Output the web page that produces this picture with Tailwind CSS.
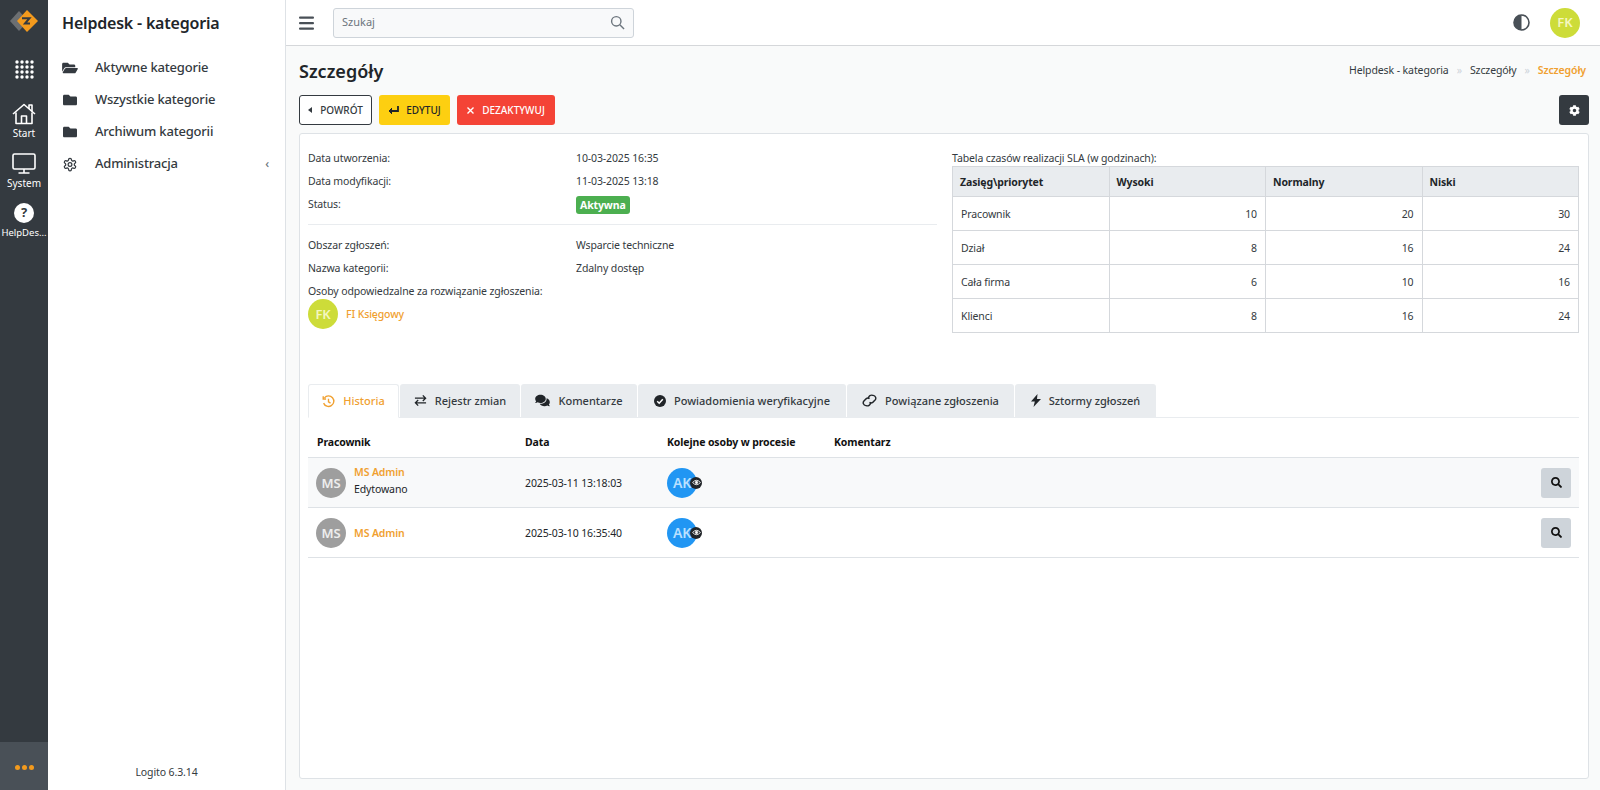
<!DOCTYPE html>
<html lang="pl">
<head>
    <meta charset="UTF-8">
    <title>Helpdesk - kategoria</title>
    <script src="https://cdn.jsdelivr.net/npm/@tailwindcss/browser@4"></script>
</head>
<body class="bg-white font-['Noto_Sans',sans-serif] text-[12px] text-[#343a40]">
<div class="flex h-[790px] w-[1600px] overflow-hidden">

    <!-- Icon rail -->
    <aside class="w-12 shrink-0 bg-[#343a40] flex flex-col items-center text-white">
        <svg class="mt-[10px] w-[30px] h-[22px]" viewBox="0 0 30 22">
            <path d="M10 1 L19 11 L10 21 L1 11 Z" fill="#6c6f72"/>
            <path d="M18 0 L29 11 L18 22 L8 11 Z" fill="#f39a1d"/>
            <path d="M13 8.2 H20.5 L16 13.5 H21" fill="none" stroke="#343a40" stroke-width="2"/>
        </svg>
        <svg class="mt-[28px] w-[19px] h-[19px]" viewBox="0 0 19 19" fill="#fff">
            <circle cx="2" cy="2" r="1.7"/><circle cx="7" cy="2" r="1.7"/><circle cx="12" cy="2" r="1.7"/><circle cx="17" cy="2" r="1.7"/>
            <circle cx="2" cy="7" r="1.7"/><circle cx="7" cy="7" r="1.7"/><circle cx="12" cy="7" r="1.7"/><circle cx="17" cy="7" r="1.7"/>
            <circle cx="2" cy="12" r="1.7"/><circle cx="7" cy="12" r="1.7"/><circle cx="12" cy="12" r="1.7"/><circle cx="17" cy="12" r="1.7"/>
            <circle cx="2" cy="17" r="1.7"/><circle cx="7" cy="17" r="1.7"/><circle cx="12" cy="17" r="1.7"/><circle cx="17" cy="17" r="1.7"/>
        </svg>
        <svg class="mt-[24px] w-6 h-[22px]" viewBox="0 0 24 22" fill="none" stroke="#fff" stroke-width="1.6" stroke-linejoin="round">
            <path d="M1 11 L12 1.5 L23 11"/>
            <path d="M17 6 V2 H20 V8.5"/>
            <path d="M4 9.5 V20.5 H20 V9.5"/>
            <path d="M9.5 20.5 V13 H14.5 V20.5"/>
        </svg>
        <span class="mt-[1px] text-[10px] leading-[14px]">Start</span>
        <svg class="mt-[13px] w-6 h-[21px]" viewBox="0 0 24 21" fill="none" stroke="#fff" stroke-width="1.6">
            <rect x="1" y="1" width="22" height="15" rx="1.5"/>
            <path d="M12 16 V20 M6.5 20 H17.5"/>
        </svg>
        <span class="mt-[2px] text-[10px] leading-[14px]">System</span>
        <div class="mt-[13px] w-5 h-5 rounded-full bg-white text-[#343a40] flex items-center justify-center text-[13px] font-bold">?</div>
        <span class="mt-[3px] w-full text-[9.5px] leading-[14px] whitespace-nowrap text-center">HelpDes...</span>
        <div class="mt-auto h-[48px] w-full bg-[#495057] flex items-center justify-center gap-[2px] pt-[2px]">
            <span class="w-[5px] h-[5px] rounded-full bg-[#f39a1d]"></span>
            <span class="w-[5px] h-[5px] rounded-full bg-[#f39a1d]"></span>
            <span class="w-[5px] h-[5px] rounded-full bg-[#f39a1d]"></span>
        </div>
    </aside>

    <!-- Module menu -->
    <aside class="w-[238px] shrink-0 bg-white border-r border-[#dee2e6] flex flex-col">
        <h1 class="mt-[10px] pl-[14px] text-[16px] tracking-[-0.2px] leading-[26px] font-semibold text-[#212529]">Helpdesk - kategoria</h1>
        <nav class="mt-[16px] text-[13px] tracking-[-0.2px] font-medium text-[#343a40]">
            <a class="flex items-center h-[32px] pl-[14px]">
                <svg class="w-[16px] h-[14px] mr-[17px]" viewBox="0 0 576 512" fill="#343a40"><path d="M572.694 292.093L500.27 416.248A63.997 63.997 0 0 1 444.989 448H45.025c-18.523 0-30.064-20.093-20.731-36.093l72.424-124.155A64 64 0 0 1 152 256h399.964c18.523 0 30.064 20.093 20.73 36.093zM152 224h328v-48c0-26.51-21.49-48-48-48H272l-64-64H48C21.49 64 0 85.49 0 112v278.046l69.077-118.418C86.214 242.25 117.989 224 152 224z"/></svg>
                Aktywne kategorie
            </a>
            <a class="flex items-center h-[31px] pl-[14px]">
                <svg class="w-[16px] h-[14px] mr-[17px]" viewBox="0 0 512 512" fill="#343a40"><path d="M464 128H272l-64-64H48C21.49 64 0 85.49 0 112v288c0 26.51 21.49 48 48 48h416c26.51 0 48-21.49 48-48V176c0-26.51-21.49-48-48-48z"/></svg>
                Wszystkie kategorie
            </a>
            <a class="flex items-center h-[33px] pl-[14px]">
                <svg class="w-[16px] h-[14px] mr-[17px]" viewBox="0 0 512 512" fill="#343a40"><path d="M464 128H272l-64-64H48C21.49 64 0 85.49 0 112v288c0 26.51 21.49 48 48 48h416c26.51 0 48-21.49 48-48V176c0-26.51-21.49-48-48-48z"/></svg>
                Archiwum kategorii
            </a>
            <a class="flex items-center h-[32px] pl-[14px] pr-[16px]">
                <svg class="w-[16px] h-[15px] mr-[17px]" viewBox="0 0 24 24" fill="none" stroke="#343a40" stroke-width="2"><path d="M12.22 2h-.44a2 2 0 0 0-2 2v.18a2 2 0 0 1-1 1.73l-.43.25a2 2 0 0 1-2 0l-.15-.08a2 2 0 0 0-2.73.73l-.22.38a2 2 0 0 0 .73 2.73l.15.1a2 2 0 0 1 1 1.72v.51a2 2 0 0 1-1 1.74l-.15.09a2 2 0 0 0-.73 2.73l.22.38a2 2 0 0 0 2.73.73l.15-.08a2 2 0 0 1 2 0l.43.25a2 2 0 0 1 1 1.73V20a2 2 0 0 0 2 2h.44a2 2 0 0 0 2-2v-.18a2 2 0 0 1 1-1.73l.43-.25a2 2 0 0 1 2 0l.15.08a2 2 0 0 0 2.73-.73l.22-.39a2 2 0 0 0-.73-2.73l-.15-.08a2 2 0 0 1-1-1.74v-.5a2 2 0 0 1 1-1.74l.15-.09a2 2 0 0 0 .73-2.73l-.22-.38a2 2 0 0 0-2.73-.73l-.15.08a2 2 0 0 1-2 0l-.43-.25a2 2 0 0 1-1-1.73V4a2 2 0 0 0-2-2z"/><circle cx="12" cy="12" r="3"/></svg>
                Administracja
                <span class="ml-auto text-[12px] text-[#6c757d]">‹</span>
            </a>
        </nav>
        <p class="mt-auto mb-[10px] text-center text-[10.5px] tracking-[-0.1px] leading-[16px] text-[#343a40]">Logito 6.3.14</p>
    </aside>

    <!-- Main -->
    <div class="flex-1 min-w-0 flex flex-col bg-[#f9fafa]">
        <header class="h-[46px] shrink-0 bg-white border-b border-[#d5d7da] flex items-center pl-[13px] pr-[20px]">
            <svg class="w-[15px] h-[14px]" viewBox="0 0 15 14" fill="#495057"><rect width="15" height="2.2" rx="1" y="0.5"/><rect width="15" height="2.2" rx="1" y="6"/><rect width="15" height="2.2" rx="1" y="11.5"/></svg>
            <div class="ml-[19px] w-[301px] h-[30px] bg-[#f8f9fa] border border-[#ced4da] rounded-[3px] flex items-center justify-between pl-[8px] pr-[8px]">
                <span class="text-[11px] text-[#6c757d]">Szukaj</span>
                <svg class="w-[15px] h-[15px]" viewBox="0 0 16 16" fill="none" stroke="#6c757d" stroke-width="1.5"><circle cx="6.7" cy="6.7" r="5"/><path d="M10.5 10.5 L15 15"/></svg>
            </div>
            <svg class="ml-auto w-[17px] h-[17px]" viewBox="0 0 17 17"><circle cx="8.5" cy="8.5" r="7.5" fill="#fff" stroke="#495057" stroke-width="1.6"/><path d="M8.5 1 A7.5 7.5 0 0 0 8.5 16 Z" fill="#495057"/></svg>
            <div class="ml-[20px] w-[30px] h-[30px] rounded-full bg-[#cddc39] text-[#f4f7c0] flex items-center justify-center text-[13px] font-semibold">FK</div>
        </header>

        <main class="flex-1 min-h-0 flex flex-col pl-[13px] pr-[11px] pb-[11px]">
            <div class="h-[49px] shrink-0 flex items-center justify-between">
                <h2 class="pt-[1px] text-[18px] font-semibold text-[#212529]">Szczegóły</h2>
                <div class="pr-[3px] flex items-center gap-[8px] text-[10.5px] tracking-[-0.1px]">
                    <span>Helpdesk - kategoria</span>
                    <span class="text-[#ced4da]">»</span>
                    <span>Szczegóły</span>
                    <span class="text-[#ced4da]">»</span>
                    <span class="text-[#f0a030] font-semibold">Szczegóły</span>
                </div>
            </div>

            <div class="flex shrink-0 h-[30px] gap-[7px] text-[10px] font-medium">
                <button class="w-[73px] bg-white border border-[#343a40] rounded-[3px] flex items-center justify-center gap-[8px]">
                    <svg class="w-[4px] h-[6px]" viewBox="0 0 4 6" fill="#343a40"><path d="M4 0 V6 L0 3 Z"/></svg>POWRÓT
                </button>
                <button class="w-[71px] bg-[#fdcf11] rounded-[3px] flex items-center justify-center gap-[7px] text-[#212529]">
                    <svg class="w-[11px] h-[9px]" viewBox="0 0 11 9" fill="none" stroke="#212529" stroke-width="1.8"><path d="M10 0 V5 H2"/><path d="M4 2 L1 5 L4 8" fill="#212529" stroke-width="1"/></svg>EDYTUJ
                </button>
                <button class="w-[98px] bg-[#f44336] rounded-[3px] flex items-center justify-center gap-[8px] text-white">
                    <svg class="w-[7px] h-[7px]" viewBox="0 0 7 7" stroke="#fff" stroke-width="1.4"><path d="M0.5 0.5 L6.5 6.5 M6.5 0.5 L0.5 6.5"/></svg>DEZAKTYWUJ
                </button>
                <button class="ml-auto w-[30px] bg-[#343a40] rounded-[3px] flex items-center justify-center">
                    <svg class="w-[11px] h-[11px]" viewBox="0 0 512 512" fill="#fff"><path d="M487.4 315.7l-42.6-24.6c4.3-23.2 4.3-47 0-70.2l42.6-24.6c4.9-2.8 7.1-8.6 5.5-14-11.1-35.6-30-67.8-54.7-94.6-3.8-4.1-10-5.1-14.8-2.3L380.8 110c-17.9-15.4-38.5-27.3-60.8-35.1V25.8c0-5.6-3.9-10.5-9.4-11.7-36.7-8.2-74.3-7.8-109.2 0-5.5 1.2-9.4 6.1-9.4 11.7V75c-22.2 7.9-42.8 19.8-60.8 35.1L88.7 85.5c-4.9-2.8-11-1.9-14.8 2.3-24.7 26.7-43.6 58.9-54.7 94.6-1.7 5.4.6 11.2 5.5 14L67.3 221c-4.3 23.2-4.3 47 0 70.2l-42.6 24.6c-4.9 2.8-7.1 8.6-5.5 14 11.1 35.6 30 67.8 54.7 94.6 3.8 4.1 10 5.1 14.8 2.3l42.6-24.6c17.9 15.4 38.5 27.3 60.8 35.1v49.2c0 5.6 3.9 10.5 9.4 11.7 36.7 8.2 74.3 7.8 109.2 0 5.5-1.2 9.4-6.1 9.4-11.7v-49.2c22.2-7.9 42.8-19.8 60.8-35.1l42.6 24.6c4.9 2.8 11 1.9 14.8-2.3 24.7-26.7 43.6-58.9 54.7-94.6 1.5-5.5-.7-11.3-5.6-14.1zM256 336c-44.1 0-80-35.9-80-80s35.9-80 80-80 80 35.9 80 80-35.9 80-80 80z"/></svg>
                </button>
            </div>

            <!-- Card -->
            <section class="mt-[8px] flex-1 min-h-0 bg-white border border-[#dee2e6] rounded-[3px] pl-[8px] pr-[9px] pt-[13px] text-[10.5px] tracking-[-0.12px] leading-[22px]">
                <div class="flex h-[237px] gap-[15px]">
                    <div class="w-[629px] shrink-0">
                        <div class="flex h-[23px]"><span class="w-[268px]">Data utworzenia:</span><span>10-03-2025 16:35</span></div>
                        <div class="flex h-[23px]"><span class="w-[268px]">Data modyfikacji:</span><span>11-03-2025 13:18</span></div>
                        <div class="flex h-[23px]"><span class="w-[268px]">Status:</span><span class="self-center h-[18px] px-[4px] rounded-[3px] bg-[#4caf50] text-white font-bold leading-[18px]">Aktywna</span></div>
                        <div class="mt-[8px] mb-[9px] border-t border-[#e9ecef]"></div>
                        <div class="flex h-[23px]"><span class="w-[268px]">Obszar zgłoszeń:</span><span>Wsparcie techniczne</span></div>
                        <div class="flex h-[23px]"><span class="w-[268px]">Nazwa kategorii:</span><span>Zdalny dostęp</span></div>
                        <p class="h-[19px]">Osoby odpowiedzalne za rozwiązanie zgłoszenia:</p>
                        <div class="flex items-center gap-[8px]">
                            <div class="w-[30px] h-[30px] rounded-full bg-[#cddc39] text-[#f4f7c0] flex items-center justify-center text-[13px] font-semibold">FK</div>
                            <span class="text-[#f0a030] font-medium">FI Księgowy</span>
                        </div>
                    </div>
                    <div class="flex-1 min-w-0">
                        <p class="h-[19px] leading-[22px]">Tabela czasów realizacji SLA (w godzinach):</p>
                        <table class="w-full table-fixed border-collapse">
                            <thead>
                                <tr class="h-[30px] bg-[#e9ecef] text-[#212529] text-left">
                                    <th class="border border-[#d5d8dc] pl-[7px] font-bold">Zasięg\priorytet</th>
                                    <th class="border border-[#d5d8dc] pl-[7px] font-bold">Wysoki</th>
                                    <th class="border border-[#d5d8dc] pl-[7px] font-bold">Normalny</th>
                                    <th class="border border-[#d5d8dc] pl-[7px] font-bold">Niski</th>
                                </tr>
                            </thead>
                            <tbody>
                                <tr class="h-[34px]"><td class="border border-[#d5d8dc] pl-[8px]">Pracownik</td><td class="border border-[#d5d8dc] pr-[8px] text-right">10</td><td class="border border-[#d5d8dc] pr-[8px] text-right">20</td><td class="border border-[#d5d8dc] pr-[8px] text-right">30</td></tr>
                                <tr class="h-[34px]"><td class="border border-[#d5d8dc] pl-[8px]">Dział</td><td class="border border-[#d5d8dc] pr-[8px] text-right">8</td><td class="border border-[#d5d8dc] pr-[8px] text-right">16</td><td class="border border-[#d5d8dc] pr-[8px] text-right">24</td></tr>
                                <tr class="h-[34px]"><td class="border border-[#d5d8dc] pl-[8px]">Cała firma</td><td class="border border-[#d5d8dc] pr-[8px] text-right">6</td><td class="border border-[#d5d8dc] pr-[8px] text-right">10</td><td class="border border-[#d5d8dc] pr-[8px] text-right">16</td></tr>
                                <tr class="h-[34px]"><td class="border border-[#d5d8dc] pl-[8px]">Klienci</td><td class="border border-[#d5d8dc] pr-[8px] text-right">8</td><td class="border border-[#d5d8dc] pr-[8px] text-right">16</td><td class="border border-[#d5d8dc] pr-[8px] text-right">24</td></tr>
                            </tbody>
                        </table>
                    </div>
                </div>

                <!-- Tabs -->
                <div class="flex h-[34px] gap-[1px] border-b border-[#e9ecef] text-[11px] tracking-normal font-medium">
                    <a class="w-[91px] h-[34px] bg-white border border-[#e9ecef] border-b-white rounded-t-[3px] flex items-center justify-center gap-[8px] text-[#f0a030]">
                        <svg class="w-[13px] h-[13px]" viewBox="0 0 16 16" fill="none" stroke="#f0a030" stroke-width="1.7"><path d="M3 3.5 A6.5 6.5 0 1 1 2 10"/><path d="M1.5 1.5 V5 H5"/><path d="M8 4.5 V8.5 L10.5 10"/></svg>Historia
                    </a>
                    <a class="w-[120px] h-[33px] bg-[#e9ecef] rounded-t-[3px] flex items-center justify-center gap-[8px]">
                        <svg class="w-[13px] h-[13px]" viewBox="0 0 14 14" fill="none" stroke="#212529" stroke-width="1.4"><path d="M1 4.5 H12.5 M9.5 1.5 L12.5 4.5 L9.5 7.5"/><path d="M13 9.5 H1.5 M4.5 6.5 L1.5 9.5 L4.5 12.5"/></svg>Rejestr zmian
                    </a>
                    <a class="w-[116px] h-[33px] bg-[#e9ecef] rounded-t-[3px] flex items-center justify-center gap-[8px]">
                        <svg class="w-[15px] h-[13px]" viewBox="0 0 576 512" fill="#212529"><path d="M416 192c0-88.4-93.1-160-208-160S0 103.6 0 192c0 34.3 14.1 65.9 38 92-13.4 30.2-35.5 54.2-35.8 54.5-2.2 2.3-2.8 5.7-1.5 8.7S4.8 352 8 352c36.6 0 66.9-12.3 88.7-25 32.2 15.7 70.3 25 111.3 25 114.9 0 208-71.6 208-160zm122 220c23.9-26 38-57.7 38-92 0-66.9-53.5-124.2-129.3-148.1.9 6.6 1.3 13.3 1.3 20.1 0 105.9-107.7 192-240 192-10.8 0-21.3-.8-31.7-1.9C207.8 439.6 281.8 480 368 480c41 0 79.1-9.2 111.3-25 21.8 12.7 52.1 25 88.7 25 3.2 0 6.1-1.9 7.3-4.8 1.3-2.9.7-6.3-1.5-8.7-.3-.3-22.4-24.2-35.8-54.5z"/></svg>Komentarze
                    </a>
                    <a class="w-[208px] h-[33px] bg-[#e9ecef] rounded-t-[3px] flex items-center justify-center gap-[8px]">
                        <svg class="w-[12px] h-[12px]" viewBox="0 0 12 12"><circle cx="6" cy="6" r="6" fill="#212529"/><path d="M3.2 6.2 L5.2 8.2 L8.8 4.2" fill="none" stroke="#fff" stroke-width="1.5"/></svg>Powiadomienia weryfikacyjne
                    </a>
                    <a class="w-[167px] h-[33px] bg-[#e9ecef] rounded-t-[3px] flex items-center justify-center gap-[8px]">
                        <svg class="w-[15px] h-[13px]" viewBox="0 0 16 14" fill="none" stroke="#212529" stroke-width="1.5"><path d="M7 4.5 A3.2 3.2 0 0 1 11.5 1.5 H12 A3 3 0 0 1 14 6.5 L11.5 9 A3 3 0 0 1 8 9"/><path d="M9 9.5 A3.2 3.2 0 0 1 4.5 12.5 H4 A3 3 0 0 1 2 7.5 L4.5 5 A3 3 0 0 1 8 5"/></svg>Powiązane zgłoszenia
                    </a>
                    <a class="w-[141px] h-[33px] bg-[#e9ecef] rounded-t-[3px] flex items-center justify-center gap-[8px]">
                        <svg class="w-[10px] h-[13px]" viewBox="0 0 10 13" fill="#212529"><path d="M6.5 0 L0 7.5 H3.8 L2.5 13 L10 5 H6 Z"/></svg>Sztormy zgłoszeń
                    </a>
                </div>

                <!-- History list -->
                <div class="text-[#212529]">
                    <div class="flex items-center h-[40px] pt-[9px] border-b border-[#dee2e6] font-bold text-[#111]">
                        <span class="w-[217px] pl-[9px]">Pracownik</span>
                        <span class="w-[142px]">Data</span>
                        <span class="w-[167px]">Kolejne osoby w procesie</span>
                        <span>Komentarz</span>
                    </div>
                    <div class="flex items-center h-[50px] bg-[#f8f9fa] border-b border-[#dee2e6]">
                        <div class="w-[217px] pl-[8px] flex items-center gap-[8px]">
                            <div class="w-[30px] h-[30px] rounded-full bg-[#9e9e9e] text-[#eee] flex items-center justify-center text-[13px] font-semibold">MS</div>
                            <div class="pb-[3px] leading-[17px]"><div class="text-[#f0a030] font-semibold">MS Admin</div><div>Edytowano</div></div>
                        </div>
                        <span class="w-[142px]">2025-03-11 13:18:03</span>
                        <div class="relative w-[30px] h-[30px] rounded-full bg-[#2196f3] text-[#b9e0ff] flex items-center justify-center text-[14px] font-semibold">AK
                            <span class="absolute right-[-5px] top-[9px] w-[12px] h-[12px] rounded-full bg-[#212529] flex items-center justify-center"><svg class="w-[9px] h-[7px]" viewBox="0 0 10 8" fill="none" stroke="#fff" stroke-width="1"><path d="M0.5 4 Q5 -1 9.5 4 Q5 9 0.5 4 Z"/><circle cx="5" cy="4" r="1.3" fill="#fff"/></svg></span>
                        </div>
                        <button class="ml-auto mr-[8px] w-[30px] h-[30px] bg-[#ced4da] rounded-[3px] flex items-center justify-center">
                            <svg class="w-[11px] h-[11px]" viewBox="0 0 512 512" fill="#111"><path d="M505 442.7L405.3 343c-4.5-4.5-10.6-7-17-7H372c27.6-35.3 44-79.7 44-128C416 93.1 322.9 0 208 0S0 93.1 0 208s93.1 208 208 208c48.3 0 92.7-16.4 128-44v16.3c0 6.4 2.5 12.5 7 17l99.7 99.7c9.4 9.4 24.6 9.4 33.9 0l28.3-28.3c9.4-9.4 9.4-24.6.1-34zM208 336c-70.7 0-128-57.2-128-128 0-70.7 57.2-128 128-128 70.7 0 128 57.2 128 128 0 70.7-57.2 128-128 128z"/></svg>
                        </button>
                    </div>
                    <div class="flex items-center h-[50px] border-b border-[#dee2e6]">
                        <div class="w-[217px] pl-[8px] flex items-center gap-[8px]">
                            <div class="w-[30px] h-[30px] rounded-full bg-[#9e9e9e] text-[#eee] flex items-center justify-center text-[13px] font-semibold">MS</div>
                            <div class="text-[#f0a030] font-semibold">MS Admin</div>
                        </div>
                        <span class="w-[142px]">2025-03-10 16:35:40</span>
                        <div class="relative w-[30px] h-[30px] rounded-full bg-[#2196f3] text-[#b9e0ff] flex items-center justify-center text-[14px] font-semibold">AK
                            <span class="absolute right-[-5px] top-[9px] w-[12px] h-[12px] rounded-full bg-[#212529] flex items-center justify-center"><svg class="w-[9px] h-[7px]" viewBox="0 0 10 8" fill="none" stroke="#fff" stroke-width="1"><path d="M0.5 4 Q5 -1 9.5 4 Q5 9 0.5 4 Z"/><circle cx="5" cy="4" r="1.3" fill="#fff"/></svg></span>
                        </div>
                        <button class="ml-auto mr-[8px] w-[30px] h-[30px] bg-[#ced4da] rounded-[3px] flex items-center justify-center">
                            <svg class="w-[11px] h-[11px]" viewBox="0 0 512 512" fill="#111"><path d="M505 442.7L405.3 343c-4.5-4.5-10.6-7-17-7H372c27.6-35.3 44-79.7 44-128C416 93.1 322.9 0 208 0S0 93.1 0 208s93.1 208 208 208c48.3 0 92.7-16.4 128-44v16.3c0 6.4 2.5 12.5 7 17l99.7 99.7c9.4 9.4 24.6 9.4 33.9 0l28.3-28.3c9.4-9.4 9.4-24.6.1-34zM208 336c-70.7 0-128-57.2-128-128 0-70.7 57.2-128 128-128 70.7 0 128 57.2 128 128 0 70.7-57.2 128-128 128z"/></svg>
                        </button>
                    </div>
                </div>
            </section>
        </main>
    </div>
</div>
</body>
</html>
